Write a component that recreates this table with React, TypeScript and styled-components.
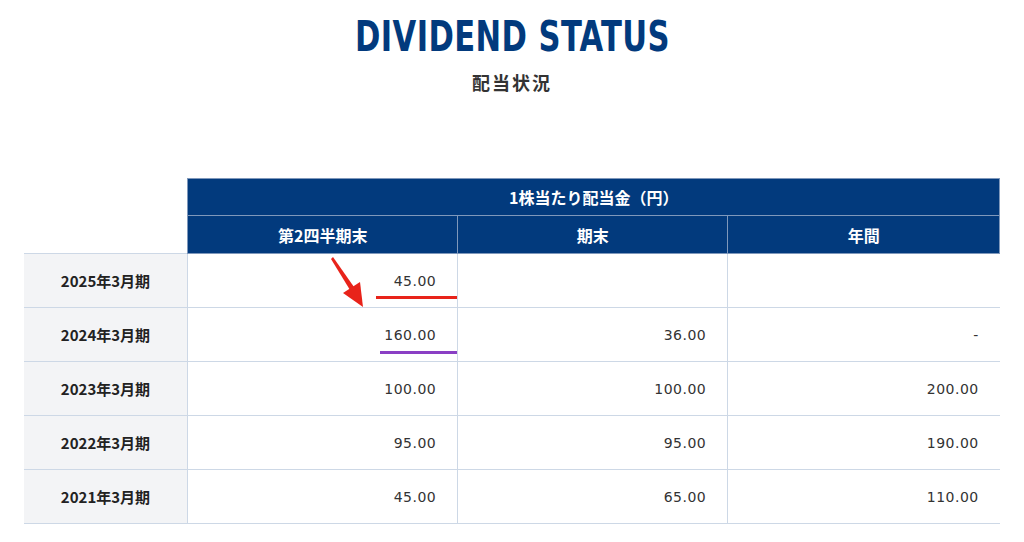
import React from 'react';
import styled, { createGlobalStyle } from 'styled-components';

const GlobalStyle = createGlobalStyle`
  body {
    margin: 0;
    background: #fff;
    font-family: "Noto Sans CJK JP", "Noto Sans", sans-serif;
    color: #333;
  }
`;

const Page = styled.div`
  display: flex;
  flex-direction: column;
  align-items: center;
  padding-top: 13px;
`;

const Title = styled.h1`
  margin: 0;
  font-family: "DejaVu Sans Condensed", "DejaVu Sans", sans-serif;
  font-weight: 700;
  font-size: 42px;
  line-height: 48px;
  color: #023a7d;
  letter-spacing: 0.5px;
  transform: scaleX(0.81);
`;

const Subtitle = styled.p`
  margin: 8px 0 0;
  font-size: 18px;
  line-height: 26px;
  font-weight: 700;
  letter-spacing: 2px;
  color: #333;
`;

const Table = styled.table`
  margin-top: 83px;
  width: 976px;
  border-collapse: collapse;
  table-layout: fixed;
`;

const HeadCell = styled.th<{ $h: number }>`
  height: ${p => p.$h}px;
  padding: 0;
  background: #023a7d;
  color: #fff;
  font-size: 16px;
  font-weight: 700;
  text-align: center;
  border: 1px solid #7f98bb;
`;

const Blank = styled.th`
  padding: 0;
  border: none;
  background: #fff;
`;

const RowHead = styled.th`
  height: 53px;
  padding: 0;
  background: #f3f4f6;
  font-size: 15px;
  font-weight: 700;
  color: #222;
  text-align: center;
  border: 1px solid #cdd8e6;
  border-left: none;
`;

const Cell = styled.td`
  position: relative;
  padding: 0 21px 0 0;
  text-align: right;
  font-family: "DejaVu Sans", sans-serif;
  font-size: 14px;
  letter-spacing: 0.5px;
  color: #333;
  border: 1px solid #cdd8e6;
  &:last-child {
    border-right: none;
  }
`;

const Mark = styled.span<{ $color: string; $width: number; $bottom: number }>`
  position: absolute;
  right: 0;
  bottom: ${p => p.$bottom}px;
  width: ${p => p.$width}px;
  height: 3px;
  background: ${p => p.$color};
`;

const Arrow = styled.svg`
  position: absolute;
  left: 140px;
  top: 0;
  width: 40px;
  height: 56px;
  overflow: visible;
`;

type Row = { label: string; values: string[] };

const rows: Row[] = [
  { label: '2025年3月期', values: ['45.00', '', ''] },
  { label: '2024年3月期', values: ['160.00', '36.00', '-'] },
  { label: '2023年3月期', values: ['100.00', '100.00', '200.00'] },
  { label: '2022年3月期', values: ['95.00', '95.00', '190.00'] },
  { label: '2021年3月期', values: ['45.00', '65.00', '110.00'] },
];

const App: React.FC = () => {
  return (
    <>
      <GlobalStyle />
      <Page>
        <Title>DIVIDEND STATUS</Title>
        <Subtitle>配当状況</Subtitle>
        <Table>
          <colgroup>
            <col style={{ width: 164 }} />
            <col style={{ width: 270 }} />
            <col style={{ width: 270 }} />
            <col style={{ width: 272 }} />
          </colgroup>
          <thead>
            <tr>
              <Blank />
              <HeadCell $h={36} colSpan={3}>1株当たり配当金（円）</HeadCell>
            </tr>
            <tr>
              <Blank />
              <HeadCell $h={37}>第2四半期末</HeadCell>
              <HeadCell $h={37}>期末</HeadCell>
              <HeadCell $h={37}>年間</HeadCell>
            </tr>
          </thead>
          <tbody>
            {rows.map((row, i) => (
              <tr key={row.label}>
                <RowHead>{row.label}</RowHead>
                {row.values.map((v, j) => (
                  <Cell key={j}>
                    {v}
                    {i === 0 && j === 0 && (
                      <>
                        <Arrow viewBox="0 0 40 56">
                          <polygon points="3,5 5,3 26,33 22,36" fill="#e8231a" />
                          <polygon points="15,39 32,28 35,53" fill="#e8231a" />
                        </Arrow>
                        <Mark $color="#e8231a" $width={81} $bottom={8} />
                      </>
                    )}
                    {i === 1 && j === 0 && <Mark $color="#8a3fc4" $width={77} $bottom={7} />}
                  </Cell>
                ))}
              </tr>
            ))}
          </tbody>
        </Table>
      </Page>
    </>
  );
};

export default App;
